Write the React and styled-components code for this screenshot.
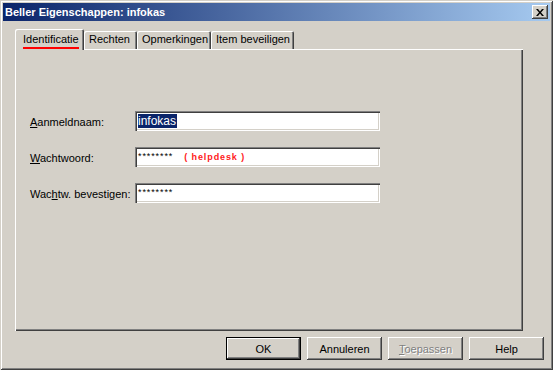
import styled, { createGlobalStyle } from "styled-components";

const GlobalStyle = createGlobalStyle`
  html, body {
    margin: 0;
    padding: 0;
    background: #d4d0c8;
  }
  * {
    box-sizing: border-box;
  }
`;

const App = () => {
  return (
    <>
      <GlobalStyle />
      <Window>
        <TitleBar>
          <span>Beller Eigenschappen: infokas</span>
          <CloseButton>
            <svg width="8" height="7" viewBox="0 0 8 7">
              <path d="M0 0h2l2 2.5L6 0h2L5 3.5 8 7H6L4 4.5 2 7H0l3-3.5z" fill="#000" />
            </svg>
          </CloseButton>
        </TitleBar>

        <Body>
          <TabStrip>
            <Tab $active $width={69}>
              <Marked>Identificatie</Marked>
            </Tab>
            <Tab $width={53}>Rechten</Tab>
            <Tab $width={74}>Opmerkingen</Tab>
            <Tab $width={83}>Item beveiligen</Tab>
          </TabStrip>

          <Panel>
            <Form>
              <Label>
                <u>A</u>anmeldnaam:
              </Label>
              <Field>
                <Selected>infokas</Selected>
              </Field>

              <Label>
                <u>W</u>achtwoord:
              </Label>
              <Field>
                <Stars>********</Stars>
                <Note>( helpdesk )</Note>
              </Field>

              <Label>
                Wac<u>h</u>tw. bevestigen:
              </Label>
              <Field>
                <Stars>********</Stars>
              </Field>
            </Form>
          </Panel>

          <ButtonRow>
            <Button $default>OK</Button>
            <Button>Annuleren</Button>
            <Button disabled>
              <u>T</u>oepassen
            </Button>
            <Button>Help</Button>
          </ButtonRow>
        </Body>
      </Window>
    </>
  );
};

const Window = styled.div`
  width: 553px;
  height: 370px;
  padding: 3px;
  background: #d4d0c8;
  font-family: "Liberation Sans", Arial, sans-serif;
  font-size: 11px;
  color: #000;
  box-shadow:
    inset 1px 1px #d4d0c8,
    inset -1px -1px #404040,
    inset 2px 2px #fff,
    inset -2px -2px #808080;
`;

const TitleBar = styled.div`
  height: 18px;
  display: flex;
  align-items: center;
  justify-content: space-between;
  padding: 0 2px 0 2px;
  background: linear-gradient(to right, #0a246a, #a6caf0);
  color: #fff;
  font-weight: bold;
  font-size: 11px;
`;

const CloseButton = styled.div`
  width: 16px;
  height: 14px;
  display: flex;
  align-items: center;
  justify-content: center;
  background: #d4d0c8;
  box-shadow:
    inset -1px -1px #404040,
    inset 1px 1px #fff,
    inset -2px -2px #808080;
`;

const Body = styled.div`
  padding: 8px 0 0 12px;
`;

const TabStrip = styled.div`
  display: flex;
  align-items: flex-end;
  height: 21px;
  margin-bottom: -1px;
  position: relative;
  z-index: 1;
`;

const Tab = styled.div`
  width: ${({ $width }) => $width}px;
  height: ${({ $active }) => ($active ? "21px" : "18px")};
  margin-bottom: ${({ $active }) => ($active ? "0" : "1px")};
  padding: ${({ $active }) => ($active ? "4px 0 0 8px" : "2px 0 0 5px")};
  background: #d4d0c8;
  border-radius: 2px 2px 0 0;
  white-space: nowrap;
  box-shadow:
    inset 1px 1px #fff,
    inset -1px 0 #404040,
    inset -2px 0 #808080;
`;

const Marked = styled.span`
  display: inline-block;
  padding-bottom: 1px;
  border-bottom: 2px solid #ff0000;
  line-height: 13px;
`;

const Panel = styled.div`
  width: 508px;
  height: 282px;
  padding: 62px 0 0 15px;
  box-shadow:
    inset 1px 1px #fff,
    inset -1px -1px #404040,
    inset -2px -2px #808080;
`;

const Form = styled.div`
  display: grid;
  grid-template-columns: 105px 245px;
  grid-auto-rows: 20px;
  row-gap: 16px;
  align-items: center;
`;

const Label = styled.div`
  white-space: nowrap;
  padding-top: 2px;
`;

const Field = styled.div`
  height: 20px;
  display: flex;
  align-items: center;
  padding: 0 3px;
  background: #fff;
  box-shadow:
    inset 1px 1px #808080,
    inset 2px 2px #404040,
    inset -1px -1px #fff,
    inset -2px -2px #d4d0c8;
`;

const Selected = styled.span`
  background: #0a246a;
  color: #fff;
  line-height: 14px;
  padding: 0 1px 0 0;
  font-size: 12px;
`;

const Stars = styled.span`
  font-size: 9px;
  letter-spacing: 0.9px;
  margin-top: -3px;
`;

const Note = styled.span`
  margin-left: 11px;
  color: #ff2020;
  font-weight: bold;
  font-size: 9px;
  letter-spacing: 0.9px;
`;

const ButtonRow = styled.div`
  display: flex;
  justify-content: flex-end;
  gap: 6px;
  margin: 6px 6px 0 0;
`;

const Button = styled.button`
  width: 75px;
  height: 23px;
  padding: 0;
  border: ${({ $default }) => ($default ? "1px solid #000" : "none")};
  background: #d4d0c8;
  font-family: "Liberation Sans", Arial, sans-serif;
  font-size: 11px;
  color: #000;
  box-shadow:
    inset -1px -1px #404040,
    inset 1px 1px #fff,
    inset -2px -2px #808080;

  &:disabled {
    color: #808080;
    text-shadow: 1px 1px #fff;
  }
`;

export default App;
